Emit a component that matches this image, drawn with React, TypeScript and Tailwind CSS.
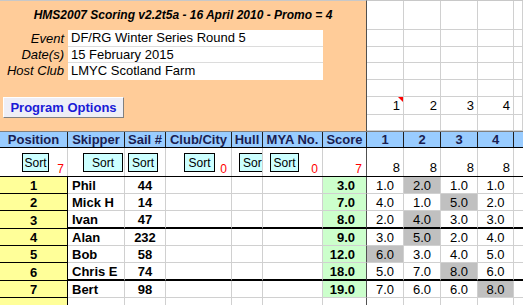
import React from 'react';

type Row = { pos: number; name: string; sail: number; score: string; races: string[]; drop: number; thick?: boolean };

const rows: Row[] = [
  { pos: 1, name: 'Phil', sail: 44, score: '3.0', races: ['1.0', '2.0', '1.0', '1.0'], drop: 1 },
  { pos: 2, name: 'Mick H', sail: 14, score: '7.0', races: ['4.0', '1.0', '5.0', '2.0'], drop: 2 },
  { pos: 3, name: 'Ivan', sail: 47, score: '8.0', races: ['2.0', '4.0', '3.0', '3.0'], drop: 1, thick: true },
  { pos: 4, name: 'Alan', sail: 232, score: '9.0', races: ['3.0', '5.0', '2.0', '4.0'], drop: 1 },
  { pos: 5, name: 'Bob', sail: 58, score: '12.0', races: ['6.0', '3.0', '4.0', '5.0'], drop: 0 },
  { pos: 6, name: 'Chris E', sail: 74, score: '18.0', races: ['5.0', '7.0', '8.0', '6.0'], drop: 2, thick: true },
  { pos: 7, name: 'Bert', sail: 98, score: '19.0', races: ['7.0', '6.0', '6.0', '8.0'], drop: 3 },
];

const COLS = 'grid grid-cols-[68px_57px_41px_66px_31px_60px_44px_37px_37px_37px_36px_9px]';
const headers = ['Position', 'Skipper', 'Sail #', 'Club/City', 'Hull', 'MYA No.', 'Score', '1', '2', '3', '4', ''];

function SortButton({ className, label = 'Sort' }: { className: string; label?: string }) {
  return (
    <div className={`mt-[5px] h-[19px] border border-black bg-[#ccffff] flex items-center text-[12px] leading-none overflow-hidden whitespace-nowrap ${className}`}>
      {label}
    </div>
  );
}

function RedNum({ n, className = '' }: { n: number; className?: string }) {
  return <span className={`ml-auto self-end pb-[1px] text-[12px] leading-[12px] text-[#ff0000] ${className}`}>{n}</span>;
}

export default function App() {
  const topRows = ['h-[30px] border-t border-[#c8c8c8]', 'h-[17px]', 'h-[16px]', 'h-[17px]', 'h-[17px]', 'h-[18px]', 'h-[16px]'];

  return (
    <div className="w-[523px] h-[305px] overflow-hidden bg-white text-black font-['Liberation_Sans',Arial,sans-serif] text-[13px]">
      {/* top block */}
      <div className="flex h-[131px]">
        <div className="w-[367px] shrink-0 bg-[#ffcc99] border-r border-[#505050] border-t border-t-[#c8c8c8]">
          <div className="h-[29px] flex items-center justify-center pb-[1px] text-[12px] font-bold italic">
            HMS2007 Scoring v2.2t5a - 16 April 2010 - Promo = 4
          </div>
          <div className="grid grid-cols-[68px_255px]">
            <div className="h-[17px] pr-[4px] text-right italic leading-[17px]">Event</div>
            <div className="h-[17px] bg-white border-b border-[#dcdcdc] pl-[3px] leading-[16px]">DF/RG Winter Series Round 5</div>
            <div className="h-[16px] pr-[4px] text-right italic leading-[16px]">Date(s)</div>
            <div className="h-[16px] bg-white border-b border-[#dcdcdc] pl-[3px] leading-[15px]">15 February 2015</div>
            <div className="h-[17px] pr-[4px] text-right italic leading-[16px]">Host Club</div>
            <div className="h-[17px] bg-white pl-[3px] leading-[16px]">LMYC Scotland Farm</div>
          </div>
          <div className="pt-[17px] pl-[3px]">
            <button className="w-[121px] h-[21px] bg-[#eeeef6] border border-t-white border-l-white border-r-[#808080] border-b-[#808080] text-[13px] font-bold text-[#1a1ad6] leading-none">
              Program Options
            </button>
          </div>
        </div>
        <div className="flex-1">
          {topRows.map((h, i) => (
            <div key={i} className={`grid grid-cols-[37px_37px_37px_36px_9px] ${h}`}>
              {[0, 1, 2, 3, 4].map((c) => (
                <div key={c} className="relative border-r border-b border-[#d0d0d0] flex items-end justify-end pr-[3px] pb-[2px] leading-[12px]">
                  {i === 5 && c < 4 ? c + 1 : ''}
                  {i === 5 && c === 0 && (
                    <span className="absolute right-0 top-0 w-0 h-0 border-l-[5px] border-l-transparent border-t-[5px] border-t-[#ff0000]" />
                  )}
                </div>
              ))}
            </div>
          ))}
        </div>
      </div>

      {/* header row */}
      <div className={`${COLS} h-[17px] bg-[#99ccff] border-t border-[#7f7f7f] border-b border-b-black`}>
        {headers.map((h, i) => (
          <div key={i} className={`flex items-end justify-center pb-[1px] leading-[13px] font-bold text-[#1a1e52] ${i < 11 ? 'border-r border-[#202020]' : ''}`}>
            {h}
          </div>
        ))}
      </div>

      {/* sort row */}
      <div className={`${COLS} h-[29px] border-b border-black`}>
        <div className="flex border-r border-[#d0d0d0] pr-[3px]">
          <SortButton className="ml-[22px] w-[27px] justify-center" />
          <RedNum n={7} />
        </div>
        <div className="flex border-r border-[#d0d0d0]">
          <SortButton className="ml-[15px] w-[40px] justify-center" />
        </div>
        <div className="flex border-r border-[#d0d0d0]">
          <SortButton className="ml-[3px] w-[30px] justify-center" />
        </div>
        <div className="flex border-r border-[#d0d0d0] pr-[4px]">
          <SortButton className="ml-[18px] w-[31px] justify-center" />
          <RedNum n={0} />
        </div>
        <div className="flex border-r border-[#d0d0d0]">
          <SortButton className="ml-[7px] w-[24px] pl-[3px] border-r-0" label="Sor" />
        </div>
        <div className="flex border-r border-[#d0d0d0] pr-[4px]">
          <SortButton className="ml-[7px] w-[29px] justify-center" />
          <RedNum n={0} />
        </div>
        <div className="flex border-r border-[#505050] pr-[4px]">
          <RedNum n={7} />
        </div>
        {[0, 1, 2, 3].map((c) => (
          <div key={c} className="flex items-end justify-end pr-[3px] pb-[2px] leading-[12px] border-r border-[#d0d0d0]">
            8
          </div>
        ))}
        <div />
      </div>

      {/* results */}
      {rows.map((r) => {
        const line = r.thick ? 'border-b-2 border-b-black' : 'border-b border-b-[#d0d0d0]';
        const h = r.thick ? 'h-[18px]' : 'h-[17px]';
        const cell = `flex items-end pb-[1px] leading-[12px] border-r border-[#d0d0d0] ${line}`;
        return (
          <div key={r.pos} className={`${COLS} ${h}`}>
            <div className="flex items-end justify-center pb-[1px] leading-[12px] font-bold bg-[#ffff99] border-r border-b border-black">{r.pos}</div>
            <div className={`${cell} font-bold pl-[4px]`}>{r.name}</div>
            <div className={`${cell} font-bold justify-center`}>{r.sail}</div>
            <div className={cell} />
            <div className={cell} />
            <div className={cell} />
            <div className={`${cell} font-bold justify-end pr-[11px] bg-[#ccffcc] border-r-[#505050]`}>{r.score}</div>
            {r.races.map((v, i) => (
              <div key={i} className={`${cell} justify-center ${i === r.drop ? 'bg-[#c0c0c0]' : ''}`}>{v}</div>
            ))}
            <div className={`${line}`} />
          </div>
        );
      })}
      <div className={`${COLS} h-[17px]`}>
        <div className="bg-[#ffff99] border-r border-black" />
        {[0, 1, 2, 3, 4].map((c) => (
          <div key={c} className="border-r border-[#d0d0d0]" />
        ))}
        <div className="border-r border-[#505050]" />
        {[0, 1, 2, 3].map((c) => (
          <div key={c} className="border-r border-[#d0d0d0]" />
        ))}
        <div />
      </div>
    </div>
  );
}
